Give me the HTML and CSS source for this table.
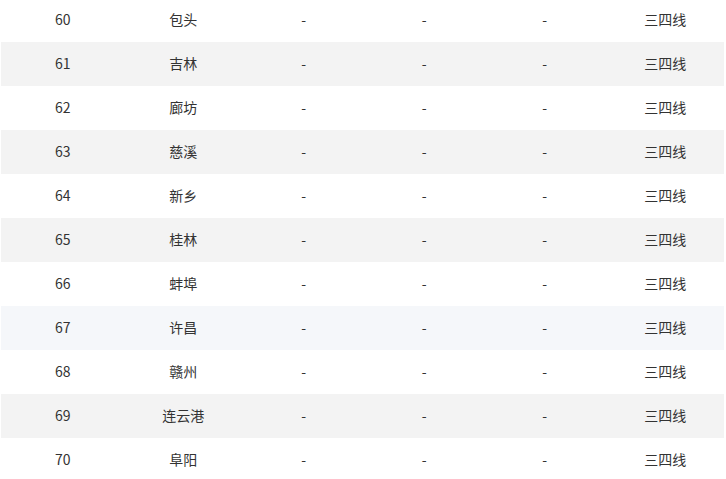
FILE: index.html
```html
<!DOCTYPE html>
<html lang="zh-CN">
<head>
<meta charset="utf-8">
<title>城市列表</title>
<link rel="stylesheet" href="styles.css">
</head>
<body>
<div class="wrap">
<table class="city-table">
<colgroup><col><col><col><col><col><col></colgroup>
<tbody>
<tr><td>60</td><td>包头</td><td>-</td><td>-</td><td>-</td><td>三四线</td></tr>
<tr class="stripe"><td>61</td><td>吉林</td><td>-</td><td>-</td><td>-</td><td>三四线</td></tr>
<tr><td>62</td><td>廊坊</td><td>-</td><td>-</td><td>-</td><td>三四线</td></tr>
<tr class="stripe"><td>63</td><td>慈溪</td><td>-</td><td>-</td><td>-</td><td>三四线</td></tr>
<tr><td>64</td><td>新乡</td><td>-</td><td>-</td><td>-</td><td>三四线</td></tr>
<tr class="stripe"><td>65</td><td>桂林</td><td>-</td><td>-</td><td>-</td><td>三四线</td></tr>
<tr><td>66</td><td>蚌埠</td><td>-</td><td>-</td><td>-</td><td>三四线</td></tr>
<tr class="hover"><td>67</td><td>许昌</td><td>-</td><td>-</td><td>-</td><td>三四线</td></tr>
<tr><td>68</td><td>赣州</td><td>-</td><td>-</td><td>-</td><td>三四线</td></tr>
<tr class="stripe"><td>69</td><td>连云港</td><td>-</td><td>-</td><td>-</td><td>三四线</td></tr>
<tr><td>70</td><td>阜阳</td><td>-</td><td>-</td><td>-</td><td>三四线</td></tr>
</tbody>
</table>
</div>
</body>
</html>
```
FILE: styles.css
```css
html, body {
  margin: 0;
  padding: 0;
  background: #ffffff;
}
.wrap {
  margin-top: -2px;
  padding-left: 1px;
  width: 723px;
}
.city-table {
  width: 723px;
  border-collapse: collapse;
  table-layout: fixed;
  font-family: "Microsoft YaHei", "Noto Sans CJK SC", sans-serif;
  font-size: 14px;
  color: #333333;
}
.city-table tr {
  height: 44px;
}
.city-table td {
  padding: 0 0 2px 3px;
  text-align: center;
  vertical-align: middle;
  line-height: 20px;
}
.city-table tr.stripe td {
  background: #f3f3f3;
}
.city-table tr.hover td {
  background: #f5f7fa;
}
```
